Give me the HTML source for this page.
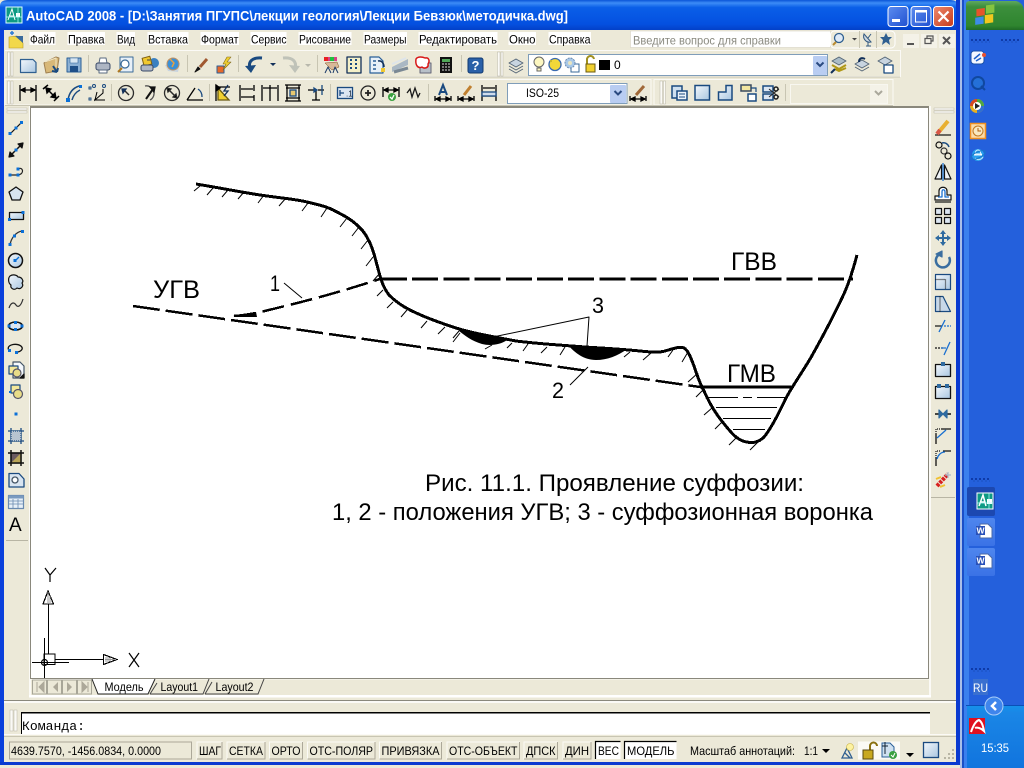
<!DOCTYPE html>
<html><head><meta charset="utf-8"><style>
html,body{margin:0;padding:0;background:#ece9d8;overflow:hidden}
svg{display:block;position:absolute;left:0;top:0}
text{font-family:"Liberation Sans",sans-serif}
</style></head><body>
<svg width="1024" height="768" viewBox="0 0 1024 768" xmlns="http://www.w3.org/2000/svg">
<defs>
<linearGradient id="tb" x1="0" y1="0" x2="0" y2="1"><stop offset="0" stop-color="#0a55d8"/><stop offset=".1" stop-color="#3c8cf6"/><stop offset=".25" stop-color="#0a5fe8"/><stop offset=".8" stop-color="#0450e0"/><stop offset="1" stop-color="#0340c8"/></linearGradient>
<linearGradient id="start" x1="0" y1="0" x2="0" y2="1"><stop offset="0" stop-color="#5fa85f"/><stop offset=".2" stop-color="#3c8f3c"/><stop offset=".85" stop-color="#2f852f"/><stop offset="1" stop-color="#1f6a26"/></linearGradient>
<linearGradient id="tbtn" x1="0" y1="0" x2="1" y2="1"><stop offset="0" stop-color="#5d8df0"/><stop offset="1" stop-color="#1f50d0"/></linearGradient>
<linearGradient id="cbtn" x1="0" y1="0" x2="1" y2="1"><stop offset="0" stop-color="#ee8a6e"/><stop offset="1" stop-color="#c63a1a"/></linearGradient>
<linearGradient id="pg" x1="0" y1="0" x2="1" y2="1"><stop offset="0" stop-color="#f4f8fc"/><stop offset="1" stop-color="#a9c6e0"/></linearGradient>
<linearGradient id="tray" x1="0" y1="0" x2="0" y2="1"><stop offset="0" stop-color="#1590ea"/><stop offset=".12" stop-color="#1a86e6"/><stop offset="1" stop-color="#1174de"/></linearGradient>
<linearGradient id="task" x1="0" y1="0" x2="0" y2="1"><stop offset="0" stop-color="#4f86ee"/><stop offset="1" stop-color="#3a72e6"/></linearGradient>
</defs>

<!-- window frame -->
<rect x="0" y="0" width="960" height="768" fill="#ece9d8"/>
<path d="M0 30V6Q0 0 8 0H950Q958 0 958 6V30Z" fill="url(#tb)"/>
<rect x="0" y="30" width="4" height="734" fill="#0a40dc"/>
<rect x="956" y="0" width="4" height="764" fill="#0a3ad0"/>
<rect x="0" y="762" width="960" height="3" fill="#0a3ad0"/>
<rect x="0" y="765" width="960" height="3" fill="#ece9d8"/>
<rect x="960" y="0" width="2" height="768" fill="#a9bfe8"/>

<!-- taskbar -->
<rect x="962" y="0" width="62" height="768" fill="#2460dc"/>
<rect x="962" y="0" width="2" height="768" fill="#1a4fc8"/>
<rect x="964" y="0" width="5" height="768" fill="#3a80ee"/>
<path d="M966 30V4Q966 1 970 1H1016Q1024 3 1024 12V30Z" fill="url(#start)"/>
<g transform="translate(986,15) scale(1.2) skewY(-8)">
<rect x="-8" y="-6" width="7" height="6" fill="#e8542a"/><rect x="0" y="-8" width="7" height="7" fill="#86c440"/><rect x="-9" y="1" width="7" height="6" fill="#3c8ce8"/><rect x="-1" y="0" width="7" height="7" fill="#f2c81e"/>
</g>
<g stroke="#0e3aa8" stroke-dasharray="2 2" stroke-width="2" fill="none"><path d="M971 40H990M1001 40H1019M971 479H990M971 669H990"/><path d="M973 42H990M1003 42H1019M973 481H990M973 671H990" stroke="#1a4fc0" stroke-width="1"/></g>
<!-- quick launch -->
<g transform="translate(978,58)"><rect x="-7" y="-7" width="13" height="13" rx="3" fill="#f4f8ff" stroke="#1a50a8"/><path d="M-4 1L2 -4M-2 3L3 0" stroke="#2060c8" stroke-width="1.500"/><circle cx="6" cy="-3" r="2" fill="#e85030"/></g>
<g transform="translate(978,83)"><circle r="6" fill="#2470d8" stroke="#1048a0" stroke-width="2"/><path d="M3 3L7 7" stroke="#1048a0" stroke-width="2"/></g>
<g transform="translate(977,106)"><circle r="7" fill="#e8b020"/><path d="M0 -7A7 7 0 0 1 7 0H0Z" fill="#50a840"/><path d="M-7 0A7 7 0 0 1 0 -7V0Z" fill="#d84820"/><path d="M7 0A7 7 0 0 1 0 7V0Z" fill="#3070d0"/><circle r="4" fill="#fff"/><path d="M-2 -3L3 0L-2 3Z" fill="#222"/></g>
<g transform="translate(978,131)"><rect x="-7.500" y="-7.500" width="15" height="15" fill="#fbdca8" stroke="#f09020" stroke-width="1.500"/><circle r="5" fill="#f8e8c0" stroke="#c07820"/><path d="M0 -3V0H3" stroke="#b06010" fill="none"/></g>
<g transform="translate(978,155)"><circle r="6" fill="#28a0ee"/><rect x="-4" y="-1.500" width="8" height="2" fill="#fff"/><path d="M-3 3A5 5 0 0 0 5 2" stroke="#bfe4fa" fill="none"/><circle r="2.500" cy="-2.500" fill="none" stroke="#d8f0ff"/><ellipse rx="8" ry="3" transform="rotate(-25)" fill="none" stroke="#1878c8"/></g>
<!-- task buttons -->
<rect x="967" y="487" width="28" height="29" rx="2" fill="#1c48b0"/>
<rect x="967" y="518" width="28" height="28" rx="2" fill="url(#task)"/>
<rect x="967" y="548" width="28" height="28" rx="2" fill="url(#task)"/>
<g transform="translate(985,501)"><rect x="-8" y="-8" width="16" height="16" fill="#0e9a84" stroke="#fff"/><path d="M-6 5L-2 -6L1 5M-4 1H0" stroke="#fff" fill="none" stroke-width="1.500"/><rect x="2" y="-2" width="5" height="5" fill="#fff"/><path d="M4 -8V8M-8 2H8" stroke="#bff" stroke-width=".7"/></g>
<g transform="translate(984,531)"><path d="M-4 -7H4L8 -3V7H-4Z" fill="#fff" stroke="#4868a8"/><rect x="-8" y="-5" width="9" height="9" fill="#2850b8"/><text x="-7.500" y="2.500" font-size="8.500" font-weight="bold" fill="#fff">W</text></g>
<g transform="translate(984,561)"><path d="M-4 -7H4L8 -3V7H-4Z" fill="#fff" stroke="#4868a8"/><rect x="-8" y="-5" width="9" height="9" fill="#2850b8"/><text x="-7.500" y="2.500" font-size="8.500" font-weight="bold" fill="#fff">W</text></g>
<!-- lang + tray -->
<rect x="973" y="679" width="15" height="16" fill="#3a70d0"/>
<text x="973" y="692" font-size="11.500" fill="#fff" textLength="15" lengthAdjust="spacingAndGlyphs">RU</text>
<rect x="967" y="706" width="57" height="62" fill="url(#tray)"/>
<rect x="966" y="705" width="58" height="1" fill="#0a50b8"/>
<circle cx="994" cy="706" r="9" fill="#3f85ec" stroke="#a9cdf8"/>
<path d="M996 702L992 706L996 710" fill="none" stroke="#fff" stroke-width="2.500"/>
<rect x="969" y="718" width="16" height="16" fill="#e01020"/>
<path d="M971 732C973 726 976 721 979 720C982 722 983 726 984 731C981 728 977 727 975 728" fill="none" stroke="#fff" stroke-width="2"/>
<text x="981" y="752" font-size="11.500" fill="#fff" textLength="28" lengthAdjust="spacingAndGlyphs">15:35</text>

<!-- title bar content -->
<g transform="translate(14,15)"><rect x="-8" y="-8" width="16" height="16" fill="#0e9a84" stroke="#dff"/><path d="M-6 5L-2 -6L1 5M-4 1H0" stroke="#fff" fill="none"/><rect x="2" y="-2" width="4" height="4" fill="#fff"/><path d="M4 -8V8M-8 2H8" stroke="#bff" stroke-width=".7"/></g>
<text x="26" y="20.500" font-size="14" font-weight="bold" fill="#fff" textLength="542" lengthAdjust="spacingAndGlyphs">AutoCAD 2008 - [D:\Занятия ПГУПС\лекции геология\Лекции Бевзюк\методичка.dwg]</text>
<rect x="888" y="6.500" width="20" height="20" rx="3" fill="url(#tbtn)" stroke="#fff"/>
<rect x="892" y="19" width="8" height="3" fill="#fff"/>
<rect x="911" y="6.500" width="20" height="20" rx="3" fill="url(#tbtn)" stroke="#fff"/>
<rect x="915.500" y="11" width="11" height="11" fill="none" stroke="#fff"/><rect x="915" y="10" width="12" height="2.500" fill="#fff"/>
<rect x="933.500" y="6.500" width="20" height="20" rx="3" fill="url(#cbtn)" stroke="#fff"/>
<path d="M938.500 11.500L948.500 21.500M948.500 11.500L938.500 21.500" stroke="#fff" stroke-width="2.200"/>

<!-- menu bar -->
<rect x="4" y="30" width="952" height="20" fill="#ece9d8"/>
<g transform="translate(17,39)"><path d="M-8 9V-2L0 -3L6 4V9Z" fill="#f2d84a" stroke="#b89a20" stroke-width=".6"/><path d="M-2 -3L6 -3V4Z" fill="#3a6a9c"/><path d="M-7 -6H-3M-5 -8V-4" stroke="#2a7ad8" stroke-width="1.500"/></g>
<g fill="#fff"><rect x="29.500" y="32" width="26" height="13"/><rect x="67.500" y="32" width="37.500" height="13"/><rect x="116.500" y="32" width="18.500" height="13"/><rect x="147.500" y="32" width="41" height="13"/><rect x="200.500" y="32" width="38.500" height="13"/><rect x="250.500" y="32" width="36" height="13"/><rect x="298.500" y="32" width="53" height="13"/><rect x="363.500" y="32" width="43.500" height="13"/><rect x="418.500" y="32" width="79" height="13"/><rect x="508.500" y="32" width="27.500" height="13"/><rect x="548.500" y="32" width="42.500" height="13"/></g>
<g font-size="12" fill="#000">
<text x="30" y="43.500" textLength="25" lengthAdjust="spacingAndGlyphs">Файл</text>
<text x="68" y="43.500" textLength="36.500" lengthAdjust="spacingAndGlyphs">Правка</text>
<text x="117" y="43.500" textLength="18" lengthAdjust="spacingAndGlyphs">Вид</text>
<text x="148" y="43.500" textLength="40" lengthAdjust="spacingAndGlyphs">Вставка</text>
<text x="201" y="43.500" textLength="37.500" lengthAdjust="spacingAndGlyphs">Формат</text>
<text x="251" y="43.500" textLength="35.500" lengthAdjust="spacingAndGlyphs">Сервис</text>
<text x="299" y="43.500" textLength="52" lengthAdjust="spacingAndGlyphs">Рисование</text>
<text x="364" y="43.500" textLength="42.500" lengthAdjust="spacingAndGlyphs">Размеры</text>
<text x="419" y="43.500" textLength="78" lengthAdjust="spacingAndGlyphs">Редактировать</text>
<text x="509" y="43.500" textLength="26.500" lengthAdjust="spacingAndGlyphs">Окно</text>
<text x="549" y="43.500" textLength="41.500" lengthAdjust="spacingAndGlyphs">Справка</text>
</g>
<rect x="630.500" y="31" width="200" height="16.500" fill="#fff" stroke="#d8d4c4" stroke-width=".6"/>
<text x="633" y="44.500" font-size="12" fill="#8a8a80" textLength="148" lengthAdjust="spacingAndGlyphs">Введите вопрос для справки</text>
<rect x="830.500" y="31" width="64.500" height="17" rx="4" fill="#ece9d8" stroke="#fff"/>
<path d="M859.500 31V48M876.500 31V48" stroke="#c8c5b2"/>
<circle cx="839" cy="38" r="4.500" fill="#dfeaf6" stroke="#2f5f90" stroke-width="1.300"/><path d="M836 42L833 45" stroke="#b88a30" stroke-width="2"/>
<path d="M852 38H857L854.500 40.500Z" fill="#444"/>
<g transform="translate(868,39)"><path d="M-4 -5A6 6 0 0 0 3 3Z" fill="#cfd8e0" stroke="#345a82"/><path d="M0 -1L3 -5M-2 7H3M0 3V7" stroke="#345a82"/></g>
<path d="M887 33L889 37H893L890 40L891 45L887 42L883 45L884 40L881 37H885Z" fill="#2f5f90" transform="translate(-1,0)"/>
<rect x="903" y="34" width="16" height="14" fill="#f4f2e8"/><rect x="921" y="34" width="16" height="14" fill="#f4f2e8"/><rect x="939" y="34" width="16" height="14" fill="#f4f2e8"/>
<rect x="907" y="43" width="7" height="2" fill="#555"/>
<path d="M925 38.500h6v5h-6zM927 38.500v-2.500h6v5h-2" fill="none" stroke="#555" stroke-width="1.200"/>
<path d="M943 37L950 44M950 37L943 44" stroke="#555" stroke-width="2"/>

<!-- toolbar rows -->
<path d="M5 50.500H900.500V76.500H5" fill="#ece9d8" stroke="#fbfaf6"/>
<path d="M5 77H900" stroke="#c8c5b2"/>
<path d="M5 79.500H651V105H5Z" fill="#ece9d8" stroke="#fbfaf6"/>
<path d="M654 79.500H893V105H654Z" fill="#ece9d8" stroke="#fbfaf6"/>
<path d="M5 105.500H893" stroke="#c8c5b2"/>
<g fill="#fbfaf6" stroke="#b8b5a4" stroke-width=".5"><rect x="7.500" y="52" width="2.500" height="24"/><rect x="11" y="52" width="2" height="24"/><rect x="7.500" y="81" width="2.500" height="23"/><rect x="11" y="81" width="2" height="23"/><rect x="497.500" y="52" width="2.500" height="24"/><rect x="501" y="52" width="2" height="24"/><rect x="660" y="81" width="2.500" height="23"/><rect x="663.500" y="81" width="2" height="23"/></g>
<g stroke="#c8c5b2"><path d="M88.500 55V72M187.500 55V72M238.500 55V72M317.500 55V72M461.500 55V72M111.500 84V101M209.500 84V101M330.500 84V101M428.500 84V101M785.500 84V101"/></g>

<!-- row 1 icons -->
<g fill="none" stroke-linejoin="round">
<path d="M20.500 59.500H33L36 62.500V72.500H20.500Z" fill="url(#pg)" stroke="#2f5f90" stroke-width="1.200"/>
<g transform="translate(51,65)"><path d="M-7 -2L5 -8L8 -7L6 6L-5 8Z" fill="#d8b878" stroke="#a08050"/><path d="M-6 -3L5 -7V2" stroke="#f0e4c0"/><path d="M2 1L6 7M6 7L1 6M6 7L7 3" stroke="#1a4a80" stroke-width="2"/></g>
<g transform="translate(74,65)"><rect x="-7" y="-7" width="14" height="14" fill="#8cb0d4" stroke="#2a5f98"/><rect x="-4" y="-7" width="8" height="5" fill="#d8e6f2" stroke="#2a5f98" stroke-width=".6"/><rect x="-4" y="1" width="8" height="6" fill="#1f4f88"/></g>
<g transform="translate(103,65)"><path d="M-3 -7H3L4 -2H-4Z" fill="#fff" stroke="#5a6a80"/><rect x="-7" y="-2" width="14" height="7" rx="2" fill="#aeb6c4" stroke="#3a4a68"/><path d="M-4 5H4V8H-4Z" fill="#fff" stroke="#5a6a80"/></g>
<g transform="translate(126,65)"><rect x="-6" y="-8" width="13" height="15" fill="#e8f0f8" stroke="#3a6a98"/><circle cx="-1" cy="-1" r="4" fill="#fff" stroke="#3a6a98" stroke-width="1.200"/><path d="M-4 3L-8 7" stroke="#b07820" stroke-width="2"/></g>
<g transform="translate(148,65)"><circle cx="6" cy="-2" r="5" fill="#3a80c0"/><rect x="-4" y="-8" width="8" height="8" fill="#f0c830" stroke="#806010" transform="rotate(-15)"/><path d="M-1 -5h3" stroke="#444"/><rect x="-7" y="0" width="12" height="6" rx="2" fill="#aeb6c4" stroke="#3a4a68"/></g>
<g transform="translate(172,65)"><path d="M-7 0L-4 6L6 7L8 -2Z" fill="#c8d4e0"/><circle cx="1" cy="-1" r="6" fill="#3a90d8" stroke="#c09060"/><path d="M-2 -6L2 -2L0 2" stroke="#e8a040" stroke-width="1.500"/></g>
<g transform="translate(201,65)"><path d="M-6 7L-3 2L-1 4Z" fill="#111" stroke="#111"/><path d="M-1 2L6 -6" stroke="#a05830" stroke-width="3"/></g>
<g transform="translate(224,65)"><rect x="-7" y="1" width="7" height="7" fill="#e86828" stroke="#2a5f98"/><path d="M3 -8L-1 -1H2L-1 5L7 -3H3L7 -8Z" fill="#f0d030" stroke="#806818" stroke-width=".6"/></g>
<path d="M262 58C252 57 248 62 250 68" stroke="#1a4a80" stroke-width="3"/><path d="M245 66L251 73L256 65Z" fill="#1a4a80"/>
<path d="M270 63H276L273 66Z" fill="#12305a"/>
<path d="M283 58C293 57 297 62 295 68" stroke="#bfc2b8" stroke-width="3"/><path d="M289 65L295 73L300 66Z" fill="#bfc2b8"/>
<path d="M305 64H311L308 67Z" fill="#b8b8ac"/>
<g transform="translate(331,65)"><rect x="-7" y="-8" width="13" height="4" fill="#d84088"/><rect x="-7" y="-8" width="4" height="4" fill="#e82020"/><rect x="-1" y="-8" width="4" height="4" fill="#20c040"/><path d="M-6 -2L6 -3L8 2L1 5Z" fill="#d8b898" stroke="#805020" stroke-width=".5"/><path d="M-6 8L-3 2L0 8M2 8L4 2L7 8" stroke="#1a3a68"/></g>
<g transform="translate(354,65)"><rect x="-7" y="-8" width="14" height="16" fill="#f4f0c8" stroke="#12305a" stroke-width="1.300"/><path d="M-4 -5h2M1 -5h2M-4 -1h2M1 -1h2M-4 3h2M1 3h2" stroke="#1a4a80" stroke-width="2"/></g>
<g transform="translate(377,65)"><path d="M-7 -8H2L6 -4V8H-7Z" fill="#e8f0f8" stroke="#2a5f98" stroke-width="1.200"/><path d="M-4 -4h3M-4 0h3M-4 4h3" stroke="#2a5f98" stroke-width="1.500"/><path d="M1 -4C5 -5 7 -1 7 2" stroke="#12305a" stroke-width="1.500"/><rect x="4" y="3" width="4" height="4" fill="#f0c830"/></g>
<g transform="translate(400,65)"><path d="M-8 2L8 -6V0L-8 7Z" fill="#aab8c4"/><path d="M-8 -1L6 -7" stroke="#dde4ea" stroke-width="2"/><path d="M-6 7L8 3" stroke="#7a8894" stroke-width="3"/></g>
<g transform="translate(423,65)"><rect x="-3" y="-2" width="11" height="10" fill="#b8c0c8" stroke="#667"/><path d="M-7 -6C-5 -9 0 -8 2 -7C6 -8 7 -4 5 -1C6 3 1 4 -1 2C-5 4 -8 0 -7 -6Z" fill="#fff" stroke="#d81818" stroke-width="1.500"/></g>
<g transform="translate(446,65)"><rect x="-6" y="-8" width="12" height="16" fill="#111"/><rect x="-4" y="-6" width="8" height="3" fill="#50a858"/><path d="M-4 -1h2M-1 -1h2M2 -1h2M-4 2h2M-1 2h2M2 2h2M-4 5h2M-1 5h2M2 5h2" stroke="#ddd"/></g>
<rect x="468" y="58" width="15" height="15" rx="2" fill="#2a60a8" stroke="#123a70"/>
<text x="471.500" y="70" font-size="13" font-weight="bold" fill="#fff" stroke="none">?</text>
<!-- layers -->
<g transform="translate(516,65)"><path d="M-7 -2L0 -6L7 -2L0 2Z" fill="#c8d4e0" stroke="#567"/><path d="M-7 1L0 5L7 1M-7 4L0 8L7 4" stroke="#567"/></g>
</g>
<rect x="528.500" y="54.500" width="299" height="21" fill="#fff" stroke="#7f9db9"/>
<rect x="813" y="56" width="14" height="19" rx="1" fill="#b9cdf2"/>
<path d="M816.500 62.500L820 66L823.500 62.500" fill="none" stroke="#2a4a80" stroke-width="2"/>
<path d="M539 58A5 5 0 0 1 539 68A5 5 0 0 1 539 58ZM537 69H541V72H537Z" fill="#fdf7c0" stroke="#666" transform="translate(0,-1)"/>
<circle cx="555" cy="64.500" r="6" fill="#f2d838" stroke="#3a6ab0" stroke-width="1.300"/>
<rect x="550" y="60" width="2" height="2" fill="#c8b830"/>
<g transform="translate(570,63)"><rect x="1" y="1" width="8" height="8" fill="#fff" stroke="#3a6a98"/><circle r="5" fill="#a8c8e8" stroke="#6a8ab0" stroke-dasharray="2 1"/><circle r="2" fill="#e8e4c0"/></g>
<g transform="translate(590,65)"><path d="M-3 -1V-5A3.500 3.500 0 0 1 4 -6" fill="none" stroke="#a09020" stroke-width="2"/><rect x="-4" y="-1" width="9" height="8" fill="#f0d030" stroke="#6a5a10"/></g>
<rect x="599" y="60" width="11" height="10" fill="#000"/>
<text x="614" y="69" font-size="12" fill="#000">0</text>
<g fill="none" stroke-linejoin="round">
<g transform="translate(839,65)"><path d="M-7 -4L0 -8L7 -4L0 0Z" fill="#aabcc8" stroke="#567"/><path d="M-7 0L0 4L7 0M-4 4L0 6L7 3" stroke="#b09818" stroke-width="2"/><path d="M-8 8L-4 4" stroke="#12305a" stroke-width="2"/></g>
<g transform="translate(862,65)"><path d="M-7 -1L0 -5L7 -1L0 3Z" fill="#c8d4e0" stroke="#567"/><path d="M-7 2L0 6L7 2" stroke="#567"/><path d="M3 -6C-1 -8 -3 -6 -3 -3" stroke="#12305a" stroke-width="2"/></g>
<g transform="translate(885,65)"><path d="M-7 -4L0 -8L7 -4L0 0Z" fill="#c8d4e0" stroke="#567"/><rect x="-1" y="0" width="9" height="8" fill="#fff" stroke="#1a4a80" stroke-width="1.300"/></g>
</g>

<!-- row 2 icons -->
<g fill="none" stroke="#000" stroke-width="1.300">
<g transform="translate(28,93)"><path d="M-8 -8V8M8 -8V8M-7 -3H7"/><path d="M-7 -3L-3 -5V-1ZM7 -3L3 -5V-1Z" fill="#000"/></g>
<g transform="translate(51,93)"><path d="M-8 -4L-3 -8M3 8L8 3M-4 -4L4 4" stroke-width="1.500"/><path d="M-5 -5L-4 0L0 -4ZM5 5L0 4L4 0Z" fill="#000"/></g>
<g transform="translate(74,93)"><path d="M-6 7C-5 0 -1 -5 5 -7M-2 7C-1 3 2 -1 6 -3" stroke="#1a4a80" stroke-width="1.500"/><rect x="-8" y="5" width="4" height="4" fill="#0a70d8" stroke="none"/><rect x="5" y="-8" width="3" height="3" fill="#0a70d8" stroke="none"/></g>
<g transform="translate(97,93)" stroke-width="1"><path d="M-3 7H8M0 -1L-2 7L6 0V-4" /><rect x="-8" y="-6" width="2" height="2" stroke="#1a4a80"/><rect x="-8" y="5" width="2" height="2" stroke="#1a4a80"/><circle cx="-3" cy="-7" r="1.500" stroke="#1a4a80"/><circle cx="7" cy="-7" r="1.500" stroke="#1a4a80"/></g>
<g transform="translate(126,93)" stroke="#2b2b2b"><circle r="7.500"/><path d="M-3 -4L3 2" stroke-width="1.500"/><path d="M-4 -4L-3 0L0 -4Z" fill="#12305a" stroke="#12305a"/></g>
<g transform="translate(149,93)" stroke="#555"><path d="M-4 -7A7.500 7.500 0 0 1 1 7" /><path d="M-3 6L4 -4" stroke="#111" stroke-width="2"/><path d="M1 -6L6 -6L5 -1Z" fill="#111" stroke="#111"/></g>
<g transform="translate(172,93)" stroke="#2b2b2b"><circle r="7.500"/><path d="M-4 -4L4 4" stroke-width="1.500"/><path d="M-5 -5L-1 -4L-4 -1ZM5 5L1 4L4 1Z" fill="#000"/></g>
<g transform="translate(195,93)"><path d="M-8 7H8M-8 7L0 -5"/><path d="M3 -4A9 9 0 0 1 7 4" stroke="#1a4a80"/></g>
<g transform="translate(223,93)"><path d="M-7 -8V8M-7 -6H7"/><path d="M-5 -5L6 7H-5Z" fill="#f0d030" stroke="#6a5a10"/><path d="M-7 -8L-3 -5L-7 -2Z" fill="#000"/><path d="M5 -8L1 -2H5L1 3" stroke="#12305a"/></g>
<g transform="translate(247,93)"><path d="M-7 -8V8M7 -8V-2M-6 -4H6M-6 4H7M7 2V8"/></g>
<g transform="translate(270,93)"><path d="M-8 -8V8M0 -8V8M8 -8V8M-7 -5H7" /></g>
<g transform="translate(293,93)"><path d="M-8 -8H8M-8 8H8M-6 -8V8M6 -8V8M-7 -5H7M-7 5H7"/><rect x="-3" y="-3" width="6" height="6" fill="#e8c870" stroke="#1a4a80"/></g>
<g transform="translate(316,93)"><path d="M0 -2V7M-4 7H4M-8 -3H-2M2 -3H8" stroke-width="1.300"/><path d="M-2 -5L1 -3L-2 -1Z" fill="#1a4a80" stroke="#1a4a80"/><path d="M6 -8V2" stroke="#1a4a80"/></g>
<g transform="translate(345,93)"><rect x="-7.500" y="-5.500" width="15" height="11" fill="#dce6f2" stroke="#1a4a80" stroke-width="1.300"/><path d="M-5 -3V3M-5 0H-1" stroke="#1a4a80"/><text x="1" y="3.500" font-size="8" fill="#123" stroke="none">.1</text></g>
<g transform="translate(368,93)" stroke="#222"><circle r="7"/><path d="M-3 0H3M0 -3V3" stroke-width="1.800"/></g>
<g transform="translate(391,93)"><path d="M-8 -6V4M8 -6V4M-7 -3H7" /><path d="M-7 -3L-3 -5V-1ZM7 -3L3 -5V-1Z" fill="#000"/><circle cx="1" cy="4" r="4" fill="#3aa040" stroke="none"/><path d="M-1 4L1 6L3 2" stroke="#fff"/></g>
<path d="M407 93L410 89L412 97L415 88L418 97L420 93" stroke="#1a1a1a"/>
<g transform="translate(443,93)"><path d="M-8 3V8M8 3V8M-7 6H7"/><path d="M-7 6L-3 4V8ZM7 6L3 4V8Z" fill="#000"/><path d="M-4 2L0 -8L4 2M-2 -1H2" stroke="#1a4a80" stroke-width="2"/></g>
<g transform="translate(466,93)"><path d="M-8 3V8M8 3V8M-7 6H7"/><path d="M-7 6L-3 4V8ZM7 6L3 4V8Z" fill="#000"/><path d="M-2 2L5 -7" stroke="#c08030" stroke-width="3"/></g>
<g transform="translate(489,93)"><path d="M-7 -8V8M7 -8V8M-6 -5H6M-6 3H6"/><rect x="-7" y="-1" width="14" height="4" fill="#cfdcec" stroke="#1a4a80"/></g>
</g>
<rect x="507.500" y="83.500" width="119.500" height="20" fill="#fff" stroke="#7f9db9"/>
<rect x="610" y="85" width="16" height="18" rx="1" fill="#b9cdf2"/>
<path d="M614.500 91L618 94.500L621.500 91" fill="none" stroke="#2a4a80" stroke-width="2"/>
<text x="526" y="97" font-size="11.500" fill="#000" textLength="33" lengthAdjust="spacingAndGlyphs">ISO-25</text>
<g transform="translate(638,93)" fill="none" stroke="#000" stroke-width="1.300"><path d="M-8 3V8M8 3V8M-7 6H7"/><path d="M-7 6L-3 4V8ZM7 6L3 4V8Z" fill="#000"/><path d="M-2 2L6 -7" stroke="#a06838" stroke-width="3"/></g>
<g fill="none" stroke="#1a4a80" stroke-width="1.500">
<g transform="translate(679,93)"><rect x="-7" y="-7" width="10" height="12" fill="#cfe0f0"/><rect x="-2" y="-2" width="10" height="9" fill="#eef4fa"/><path d="M0 1H6M0 4H6" stroke-width="1"/></g>
<rect x="695" y="85.500" width="14.500" height="14.500" fill="url(#pg)"/>
<path d="M718.500 100H732V85.500H726V92H718.500Z" fill="url(#pg)"/>
<g transform="translate(748,93)"><rect x="-7" y="-8" width="10" height="6" fill="#f2e6a0" stroke="#3a4a60"/><rect x="0" y="1" width="8" height="7" fill="#fff"/><path d="M3 -5H8V-1" stroke-width="1.200"/></g>
<g transform="translate(771,93)"><rect x="-8" y="-7" width="10" height="6" fill="#dce6f2"/><rect x="-8" y="1" width="10" height="6" fill="#dce6f2"/><circle cx="5" cy="-4" r="2" stroke="#222"/><circle cx="5" cy="4" r="2" stroke="#222"/><path d="M-2 -4L8 4M-2 4L8 -4" stroke="#222" stroke-width="1"/></g>
</g>
<rect x="790.500" y="84.500" width="97" height="19" fill="#ece9d8" stroke="#f8f7f0"/>
<rect x="870" y="85" width="17" height="18" fill="#f4f2e8"/>
<path d="M875 91L878.500 94.500L882 91" fill="none" stroke="#aaa89c" stroke-width="2"/>

<!-- drawing area -->
<rect x="29" y="106" width="902" height="591" fill="#fbfaf6"/>
<rect x="30" y="106" width="899" height="573" fill="#8a887c"/>
<rect x="31" y="108" width="897" height="570" fill="#fff"/>
<rect x="31" y="679.500" width="898" height="15.500" fill="#ece9d8"/>
<rect x="29" y="695" width="902" height="2.500" fill="#fff"/>
<rect x="4" y="700" width="952" height="1" fill="#8a887c"/>
<rect x="4" y="701" width="952" height="2" fill="#fbfaf6"/>

<!-- drawing -->
<g fill="none" stroke="#000" stroke-linecap="butt" stroke-linejoin="round" shape-rendering="crispEdges">
<path stroke-width="3" d="M196 184C215 187 240 192 260 195C280 198 295 199 307 202C320 205 328 207 335 211C345 216 352 220 358 226C364 231 367 237 370 243C374 252 375 258 377 265C379 272 380 277 382 282C384 288 386 291 389 295C395 301 402 306 410 310C420 315 435 321 450 326C470 333 490 336 516 341C540 344 560 345 585 347C600 348 620 349 640 351C650 352 658 353 665 351C672 349 680 346 684 348C688 350 691 358 694 366C697 375 700 384 704 391C708 400 713 409 718 416C724 424 730 432 736 437C741 441 745 442 750 442.500C756 443 760 441 764 437C770 430 778 415 786 398C796 380 806 367 814 352C824 334 834 315 842 298C848 286 853 270 857 255"/>
<path stroke-width="3" stroke-dasharray="26 5.200" d="M381 279H853"/>
<path stroke-width="2.500" stroke-dasharray="27 6" d="M133 306L700 387"/>
<path stroke-width="2.500" stroke-dasharray="22 7" d="M234 316C250 315 265 311 285 306C310 300 340 292 380 279"/>
<path stroke-width="3" d="M700 387H792"/>
<g stroke-width="1" shape-rendering="auto">
<path d="M708 397.500H738M743 397.500H752M757 397.500H785M716 407.500H777M723 418.500H771M733 429.500H765"/>
<path d="M284 283L302 298M493 337L589 317L587 346M570 385L588 367"/>
<path d="M200 186L194 191M213 188L207 195M228 190L222 197M244 192L238 199M264 195L258 203M286 198L279 206M308 203L302 211M327 208L321 217M347 218L340 227M359 227L352 236M368 240L361 249M373 257L366 266M380 273L373 281M383 290L377 296M393 302L387 308M407 310L401 317M427 321L421 328M445 327L438 334M459 331L453 338"/>
<path d="M460 333L453 342M492 345L485 349M512 343L507 348M528 344L523 351M547 347L541 353M565 347L560 355M630 352L624 357M651 353L643 360M673 350L668 357M688 352L682 362M698 373L688 382M703 390L696 397M712 408L704 415M722 422L715 429M737 437L729 445M758 442L750 450"/>
</g>
</g>
<path d="M233 316L256 312L257 317L240 317Z" fill="#000"/>
<path d="M458 330C470 333 490 337 507 340C500 345 490 346 482 344C472 341 465 336 458 330Z" fill="#000"/>
<path d="M568 345C585 346 610 348 627 349C618 356 607 360 596 360C584 360 575 353 568 345Z" fill="#000"/>
<g fill="#000" font-size="25">
<text x="153" y="298" textLength="47" lengthAdjust="spacingAndGlyphs">УГВ</text>
<text x="731" y="270" textLength="46" lengthAdjust="spacingAndGlyphs">ГВВ</text>
<text x="727" y="382" textLength="49" lengthAdjust="spacingAndGlyphs">ГМВ</text>
<text x="270" y="291" font-size="22" textLength="10" lengthAdjust="spacingAndGlyphs">1</text>
<text x="592" y="313" font-size="22" textLength="12" lengthAdjust="spacingAndGlyphs">3</text>
<text x="552" y="398" font-size="22" textLength="12" lengthAdjust="spacingAndGlyphs">2</text>
<text x="425" y="491" font-size="24" textLength="379" lengthAdjust="spacingAndGlyphs">Рис. 11.1. Проявление суффозии:</text>
<text x="332" y="520" font-size="24" textLength="541" lengthAdjust="spacingAndGlyphs">1, 2 - положения УГВ; 3 - суффозионная воронка</text>
</g>

<!-- UCS -->
<g fill="none" stroke="#000" stroke-width="1.200" shape-rendering="crispEdges">
<path d="M48.500 604V654M55 659.500H103"/>
<path d="M44 654H55V664.500H44Z"/>
<path d="M32 662.500H69M44.500 638V678"/>
<circle cx="44.500" cy="662.500" r="3" shape-rendering="auto"/>
<path d="M48 591L43 604H53.500Z" fill="#fff"/>
<path d="M103.500 654.500V664.500L117 659.500Z" fill="#fff"/>
<path d="M48 592L48 604M50 596L50 604" stroke="#999"/>
<path d="M105 659.500H116M105 658H111M105 661H111" stroke="#999"/>
<path d="M45 568L50 575L56 568M50 575V582M129 653L139 667M139 653L129 667" shape-rendering="auto"/>
</g>

<!-- tab bar -->
<g fill="none" stroke="#a8a698">
<rect x="32.500" y="680" width="14" height="14" fill="#ece9d8"/><rect x="47.500" y="680" width="14" height="14" fill="#ece9d8"/><rect x="62.500" y="680" width="14" height="14" fill="#ece9d8"/><rect x="77.500" y="680" width="14" height="14" fill="#ece9d8"/>
</g>
<path d="M37 682V692M44 682L39 687L44 692Z" fill="#aca899" stroke="#aca899"/>
<path d="M58 682L53 687L58 692Z M67 682L72 687L67 692Z" fill="#aca899"/>
<path d="M82 682L87 687L82 692ZM88 682V692" fill="#aca899" stroke="#aca899"/>
<path d="M92 679L98 694H148L151 688L155 679Z" fill="#fff"/>
<path d="M92 679L98 694H148L155 679" fill="none" stroke="#222"/>
<path d="M150 694H203L209 679M205 694H258L264 679M150 694L157 683M205 694L212 682" fill="none" stroke="#444"/>
<g font-size="12" fill="#000">
<text x="104.500" y="691" textLength="39" lengthAdjust="spacingAndGlyphs">Модель</text>
<text x="160.500" y="691" textLength="37.500" lengthAdjust="spacingAndGlyphs">Layout1</text>
<text x="215.500" y="691" textLength="38" lengthAdjust="spacingAndGlyphs">Layout2</text>
</g>

<!-- left toolbar -->
<g fill="#fbfaf6" stroke="#b8b5a4" stroke-width=".5"><rect x="7" y="108" width="20" height="2"/><rect x="7" y="111" width="20" height="2"/></g>
<path d="M6 540.500H28" stroke="#b8b5a4"/>
<g fill="none" stroke="#111" stroke-width="1.200" stroke-linejoin="round">
<path d="M10 134L22 122"/><g fill="#0a70d8" stroke="none"><rect x="8.500" y="132" width="3" height="3"/><rect x="14.500" y="126.500" width="3" height="3"/><rect x="20" y="121" width="3" height="3"/></g>
<path d="M9 157L23 143" stroke-width="1.500"/><path d="M23 143L18 144L22 148ZM9 157L10 152L14 156Z" fill="#111"/><rect x="14.500" y="148.500" width="3" height="3" fill="#0a70d8" stroke="none"/>
<path d="M10 175H18M18 169C23 166 25 174 18 175" stroke="#222"/><g fill="#0a70d8" stroke="none"><rect x="8.500" y="173.500" width="3" height="3"/><rect x="16.500" y="173.500" width="3" height="3"/><rect x="16.500" y="167.500" width="3" height="3"/></g>
<path d="M16 187L23 192L20 200H12L9 192Z" fill="#d8e4f0" stroke-width="1.300"/>
<rect x="9.500" y="212.500" width="14" height="7" fill="url(#pg)" stroke-width="1.300"/><g fill="#0a70d8" stroke="none"><rect x="8" y="218" width="3" height="3"/><rect x="21.500" y="211" width="3" height="3"/></g>
<path d="M10 245C11 238 16 232 22 231" stroke="#333" stroke-width="1.300"/><g fill="#0a70d8" stroke="none"><rect x="8.500" y="243" width="3" height="3"/><rect x="21" y="230" width="3" height="3"/><rect x="13" y="234.500" width="3" height="3"/></g>
<circle cx="15.500" cy="260.500" r="7" fill="url(#pg)" stroke-width="1.500"/><path d="M15 261L19 257" stroke="#0a70d8" stroke-width="1.300"/><rect x="13.500" y="259" width="3" height="3" fill="#0a70d8" stroke="none"/>
<path d="M10 276C13 274 17 275 18 277C22 277 24 281 22 283C24 286 21 290 17 288C14 291 10 288 11 285C8 283 8 278 10 276Z" fill="url(#pg)" stroke-width="1.200"/>
<path d="M9 308C11 302 14 302 16 305C18 308 21 306 23 299" stroke="#333"/>
<ellipse cx="15.500" cy="326" rx="7" ry="4" fill="#dce6f2" stroke-width="1.500"/><g fill="#0a70d8" stroke="none"><rect x="14" y="321" width="3" height="3"/><rect x="14" y="328" width="3" height="3"/><rect x="7.500" y="324.500" width="3" height="3"/><rect x="20.500" y="324.500" width="3" height="3"/></g>
<path d="M10 351A7 4 0 1 1 18 352" stroke-width="1.300"/><g fill="#0a70d8" stroke="none"><rect x="8" y="349" width="3" height="3"/><rect x="15" y="351" width="3" height="3"/></g>
<g transform="translate(16,370)"><path d="M-3 -8H4L8 -4V8H-3Z" fill="#f4f8fc" stroke="#456"/><rect x="-7" y="-4" width="9" height="8" fill="#f4e89a" stroke="#1a4a80"/><circle cx="1" cy="3" r="4" fill="#e8dc88" stroke="#556"/><path d="M4 8L8 8L8 4Z" fill="#111"/></g>
<g transform="translate(16,392)"><rect x="-5" y="-7" width="9" height="8" fill="#f4e89a" stroke="#1a4a80"/><circle cx="2" cy="2" r="4.500" fill="#e8dc88" stroke="#556"/><rect x="-7" y="-1" width="2" height="2" fill="#0a70d8" stroke="none"/></g>
<rect x="14.500" y="412.500" width="3" height="3" fill="#0a70d8" stroke="none"/>
<g transform="translate(16,436)" stroke="#1a4a80"><path d="M-8 -5H8M-8 5H8M-5 -8V8M5 -8V8" stroke-width="1.300"/><rect x="-5" y="-5" width="10" height="10" fill="#b8c4d0" stroke-dasharray="1 1"/></g>
<g transform="translate(16,458)" stroke="#111"><rect x="-5" y="-5" width="10" height="10" fill="#6a5a60"/><path d="M-5 5L5 -5L5 5Z" fill="#b8a458" stroke="none"/><path d="M-8 -5H8M-8 5H8M-5 -8V8M5 -8V8" stroke-width="1.500"/></g>
<path d="M9 473.500H19L24 479V487H9Z" fill="#d8e4f0" stroke="#1a4a80" stroke-width="1.300"/><circle cx="15" cy="480" r="3" fill="#fff" stroke="#456" stroke-width="1.300"/>
<g transform="translate(16,502)"><rect x="-7.500" y="-6.500" width="15" height="13" fill="#e8f0f8" stroke="#6a8ab0"/><rect x="-7.500" y="-6.500" width="15" height="3" fill="#7a9ac0" stroke="none"/><path d="M-7 -1H7M-7 2H7M-3 -3V6M2 -3V6" stroke="#6a8ab0" stroke-width=".8"/></g>
</g>
<text x="9" y="531" font-size="19" fill="#000">A</text>

<!-- right toolbar -->
<g fill="#fbfaf6" stroke="#b8b5a4" stroke-width=".5"><rect x="934" y="108" width="20" height="2"/><rect x="934" y="111" width="20" height="2"/></g>
<path d="M931 497.500H955" stroke="#b8b5a4"/>
<g fill="none" stroke="#111" stroke-width="1.200" stroke-linejoin="round">
<g transform="translate(943,128)"><path d="M-8 7H8" /><path d="M-5 5L5 -7" stroke="#e8b030" stroke-width="4"/><path d="M-6 6L-3 2" stroke="#d85848" stroke-width="4"/></g>
<g transform="translate(943,150)"><circle cx="-4" cy="-5" r="3"/><circle cx="1" cy="1" r="3" stroke="#333"/><circle cx="5" cy="6" r="3"/><path d="M-1 -7C2 -8 5 -6 6 -3" stroke="#1a4a80" stroke-width="1.500"/></g>
<g transform="translate(943,172)"><path d="M-1.500 -7L-8 7H-1.500ZM1.500 -7L8 7H1.500Z" fill="#f0f4f8"/><path d="M0 -9V9" stroke="#1a70d0" stroke-width="1.300"/></g>
<g transform="translate(943,194)"><path d="M-8 6V2H-4V-3C-4 -8 4 -8 4 -3V1H8V6Z" fill="#fff"/><path d="M-5 3H-1V-2C-1 -5 2 -5 2 -2V3H6" stroke="#1a70d0" stroke-width="1.300"/><path d="M-8 8H8"/></g>
<g transform="translate(943,216)" fill="#dce6f2" stroke-width="1.200"><rect x="-7.500" y="-7.500" width="6" height="6"/><rect x="1.500" y="-7.500" width="6" height="6"/><rect x="-7.500" y="1.500" width="6" height="6"/><rect x="1.500" y="1.500" width="6" height="6"/></g>
<g transform="translate(943,238)" fill="#2f6aa0" stroke="none"><path d="M0 -8L3 -4H1V-1H4V-3L8 0L4 3V1H1V4H3L0 8L-3 4H-1V1H-4V3L-8 0L-4 -3V-1H-1V-4H-3Z"/></g>
<g transform="translate(943,260)"><path d="M-3 -6A7 7 0 1 0 6 -3" stroke="#3a6ea0" stroke-width="2.500"/><path d="M-7 -6L-1 -9L-1 -3Z" fill="#3a6ea0" stroke="#3a6ea0"/></g>
<g transform="translate(943,282)"><rect x="-7.500" y="-7.500" width="15" height="15" fill="url(#pg)" stroke="#1a4a80"/><path d="M-7.500 -2.500H2.500V7.500" stroke="#111" stroke-dasharray="1 1"/></g>
<g transform="translate(943,304)"><path d="M-7.500 7.500V-7.500H0L7.500 7.500Z" fill="#c8d8e8" stroke="#1a4a80"/><path d="M-3 -7.500V7.500" stroke="#111" stroke-dasharray="1 1"/></g>
<g transform="translate(943,326)" stroke="#1a70d0"><path d="M-8 0H-1" stroke="#111"/><path d="M-4 6L2 -6" stroke-width="1.300"/><path d="M1 0H8" stroke-dasharray="2 1"/></g>
<g transform="translate(943,348)" stroke="#1a70d0"><path d="M-8 0H0" stroke="#111" stroke-dasharray="2 1"/><path d="M1 7L7 -6" stroke-width="1.300"/><path d="M-2 0H3"/></g>
<g transform="translate(943,370)"><rect x="-7.500" y="-5.500" width="15" height="12" fill="url(#pg)" stroke-width="1.300"/><rect x="-2" y="-8" width="4" height="4" fill="#2f6aa0" stroke="none"/></g>
<g transform="translate(943,392)"><rect x="-7.500" y="-5.500" width="15" height="12" fill="url(#pg)" stroke-width="1.300"/><rect x="-6" y="-8" width="4" height="4" fill="#2f6aa0" stroke="none"/><rect x="2" y="-8" width="4" height="4" fill="#2f6aa0" stroke="none"/></g>
<g transform="translate(943,414)"><path d="M-8 0H8" stroke-width="1.500"/><path d="M-4 -4L0 0L-4 4ZM4 -4L0 0L4 4Z" fill="#2f6aa0" stroke="#2f6aa0"/></g>
<g transform="translate(943,436)"><path d="M-7 8V-2M-2 -7H8" stroke-width="1.300"/><path d="M-6 2L3 -6" stroke="#1a70d0" stroke-width="1.300"/><path d="M-7 -2V-7H-2" stroke-dasharray="1 1"/></g>
<g transform="translate(943,458)"><path d="M-7 8V-1M0 -7H8" stroke-width="1.300"/><path d="M-6 1C-5 -3 -2 -6 2 -6" stroke="#1a70d0" stroke-width="1.300"/><path d="M-7 -2V-7H-2" stroke-dasharray="1 1"/></g>
<g transform="translate(943,480)"><path d="M-6 6L5 -6" stroke="#d82020" stroke-width="4" stroke-dasharray="3 1"/><path d="M-7 -1L-2 -3M-3 7L2 5" stroke="#f0c030" stroke-width="2"/><path d="M5 -8V-2M2 -5H8" stroke="#aabbcc"/></g>
</g>

<!-- command line -->
<g fill="#fbfaf6" stroke="#b8b5a4" stroke-width=".5"><rect x="10" y="710" width="3" height="21"/><rect x="14" y="710" width="3" height="21"/></g>
<rect x="21" y="712" width="909" height="22" fill="#fff"/>
<rect x="21" y="712" width="909" height="1.500" fill="#000"/>
<rect x="21" y="712" width="1" height="22" fill="#000"/>
<path d="M4 734.500H956" stroke="#fbfaf6"/><path d="M4 736.500H956" stroke="#c8c5b2"/>
<text x="22" y="730" style='font-family:"Liberation Mono",monospace' font-size="12.500" fill="#000" textLength="63" lengthAdjust="spacingAndGlyphs">Команда:</text>

<!-- status bar -->
<rect x="9.500" y="742" width="182" height="17" fill="none" stroke="#aca899"/>
<g fill="#ece9d8" stroke="#fbfaf6">
<rect x="197" y="742" width="25" height="17"/><rect x="227" y="742" width="38" height="17"/><rect x="269.500" y="742" width="33" height="17"/><rect x="307.500" y="742" width="67.500" height="17"/><rect x="379.500" y="742" width="62" height="17"/><rect x="447" y="742" width="72.500" height="17"/><rect x="524" y="742" width="33.500" height="17"/><rect x="563" y="742" width="28" height="17"/>
</g>
<g fill="none" stroke="#aca899"><path d="M222 742V759H197M265 742V759H227M302.500 742V759H269.500M375 742V759H307.500M441.500 742V759H379.500M519.500 742V759H447M557.500 742V759H524M591 742V759H563"/></g>
<rect x="595.500" y="741.500" width="25" height="17.500" fill="#fff"/><path d="M595.500 759V741.500H620.500" fill="none" stroke="#000" stroke-width="1.200"/>
<rect x="624.500" y="741.500" width="52" height="17.500" fill="#fff"/><path d="M624.500 759V741.500H676.500" fill="none" stroke="#000" stroke-width="1.200"/>
<g font-size="12" fill="#000">
<text x="11" y="755" textLength="150" lengthAdjust="spacingAndGlyphs">4639.7570, -1456.0834, 0.0000</text>
<text x="199" y="755" textLength="22" lengthAdjust="spacingAndGlyphs">ШАГ</text>
<text x="229" y="755" textLength="34" lengthAdjust="spacingAndGlyphs">СЕТКА</text>
<text x="271.500" y="755" textLength="29" lengthAdjust="spacingAndGlyphs">ОРТО</text>
<text x="309.500" y="755" textLength="63.500" lengthAdjust="spacingAndGlyphs">ОТС-ПОЛЯР</text>
<text x="381.500" y="755" textLength="58" lengthAdjust="spacingAndGlyphs">ПРИВЯЗКА</text>
<text x="449" y="755" textLength="68.500" lengthAdjust="spacingAndGlyphs">ОТС-ОБЪЕКТ</text>
<text x="526" y="755" textLength="29.500" lengthAdjust="spacingAndGlyphs">ДПСК</text>
<text x="565" y="755" textLength="24" lengthAdjust="spacingAndGlyphs">ДИН</text>
<text x="598" y="755" textLength="21" lengthAdjust="spacingAndGlyphs">ВЕС</text>
<text x="627" y="755" textLength="47.500" lengthAdjust="spacingAndGlyphs">МОДЕЛЬ</text>
<text x="690" y="755" textLength="105" lengthAdjust="spacingAndGlyphs">Масштаб аннотаций:</text>
<text x="804" y="755" textLength="14" lengthAdjust="spacingAndGlyphs">1:1</text>
</g>
<path d="M822 749H830L826 753Z" fill="#000"/>
<g transform="translate(847,751)" fill="none"><path d="M-5 7L0 -3L5 7H-5Z M-2 2L3 7" stroke="#2f5f90" stroke-width="1.300"/><circle cx="3" cy="-4" r="3.500" fill="#fdf2a0" stroke="#c8b040" stroke-width=".6"/></g>
<rect x="858" y="741.500" width="42" height="18" fill="#fbfaf6"/>
<g transform="translate(869,751)"><path d="M1 -1V-5A3.500 3.500 0 0 1 8 -5" fill="none" stroke="#8a7010" stroke-width="2"/><rect x="-6" y="-1" width="10" height="9" fill="#c8a820" stroke="#5a4a10"/></g>
<g transform="translate(888,750)"><path d="M-6 -7H2L6 -3V7H-6Z" fill="#cfe0f0" stroke="#2a5f98"/><path d="M-3 -8V4M-6 -4H0" stroke="#123" /><circle cx="5" cy="5" r="4" fill="#3aa040"/><path d="M3 5L5 7L7 3" stroke="#fff" fill="none"/></g>
<path d="M906 753H914L910 757Z" fill="#000"/>
<rect x="923.500" y="742.500" width="15" height="15" fill="url(#pg)" stroke="#1a4a80" stroke-width="1.300"/>
<g fill="#b8b5a4"><rect x="952" y="749" width="2" height="2"/><rect x="948" y="753" width="2" height="2"/><rect x="952" y="753" width="2" height="2"/><rect x="944" y="757" width="2" height="2"/><rect x="948" y="757" width="2" height="2"/><rect x="952" y="757" width="2" height="2"/></g>
</svg>
</body></html>
